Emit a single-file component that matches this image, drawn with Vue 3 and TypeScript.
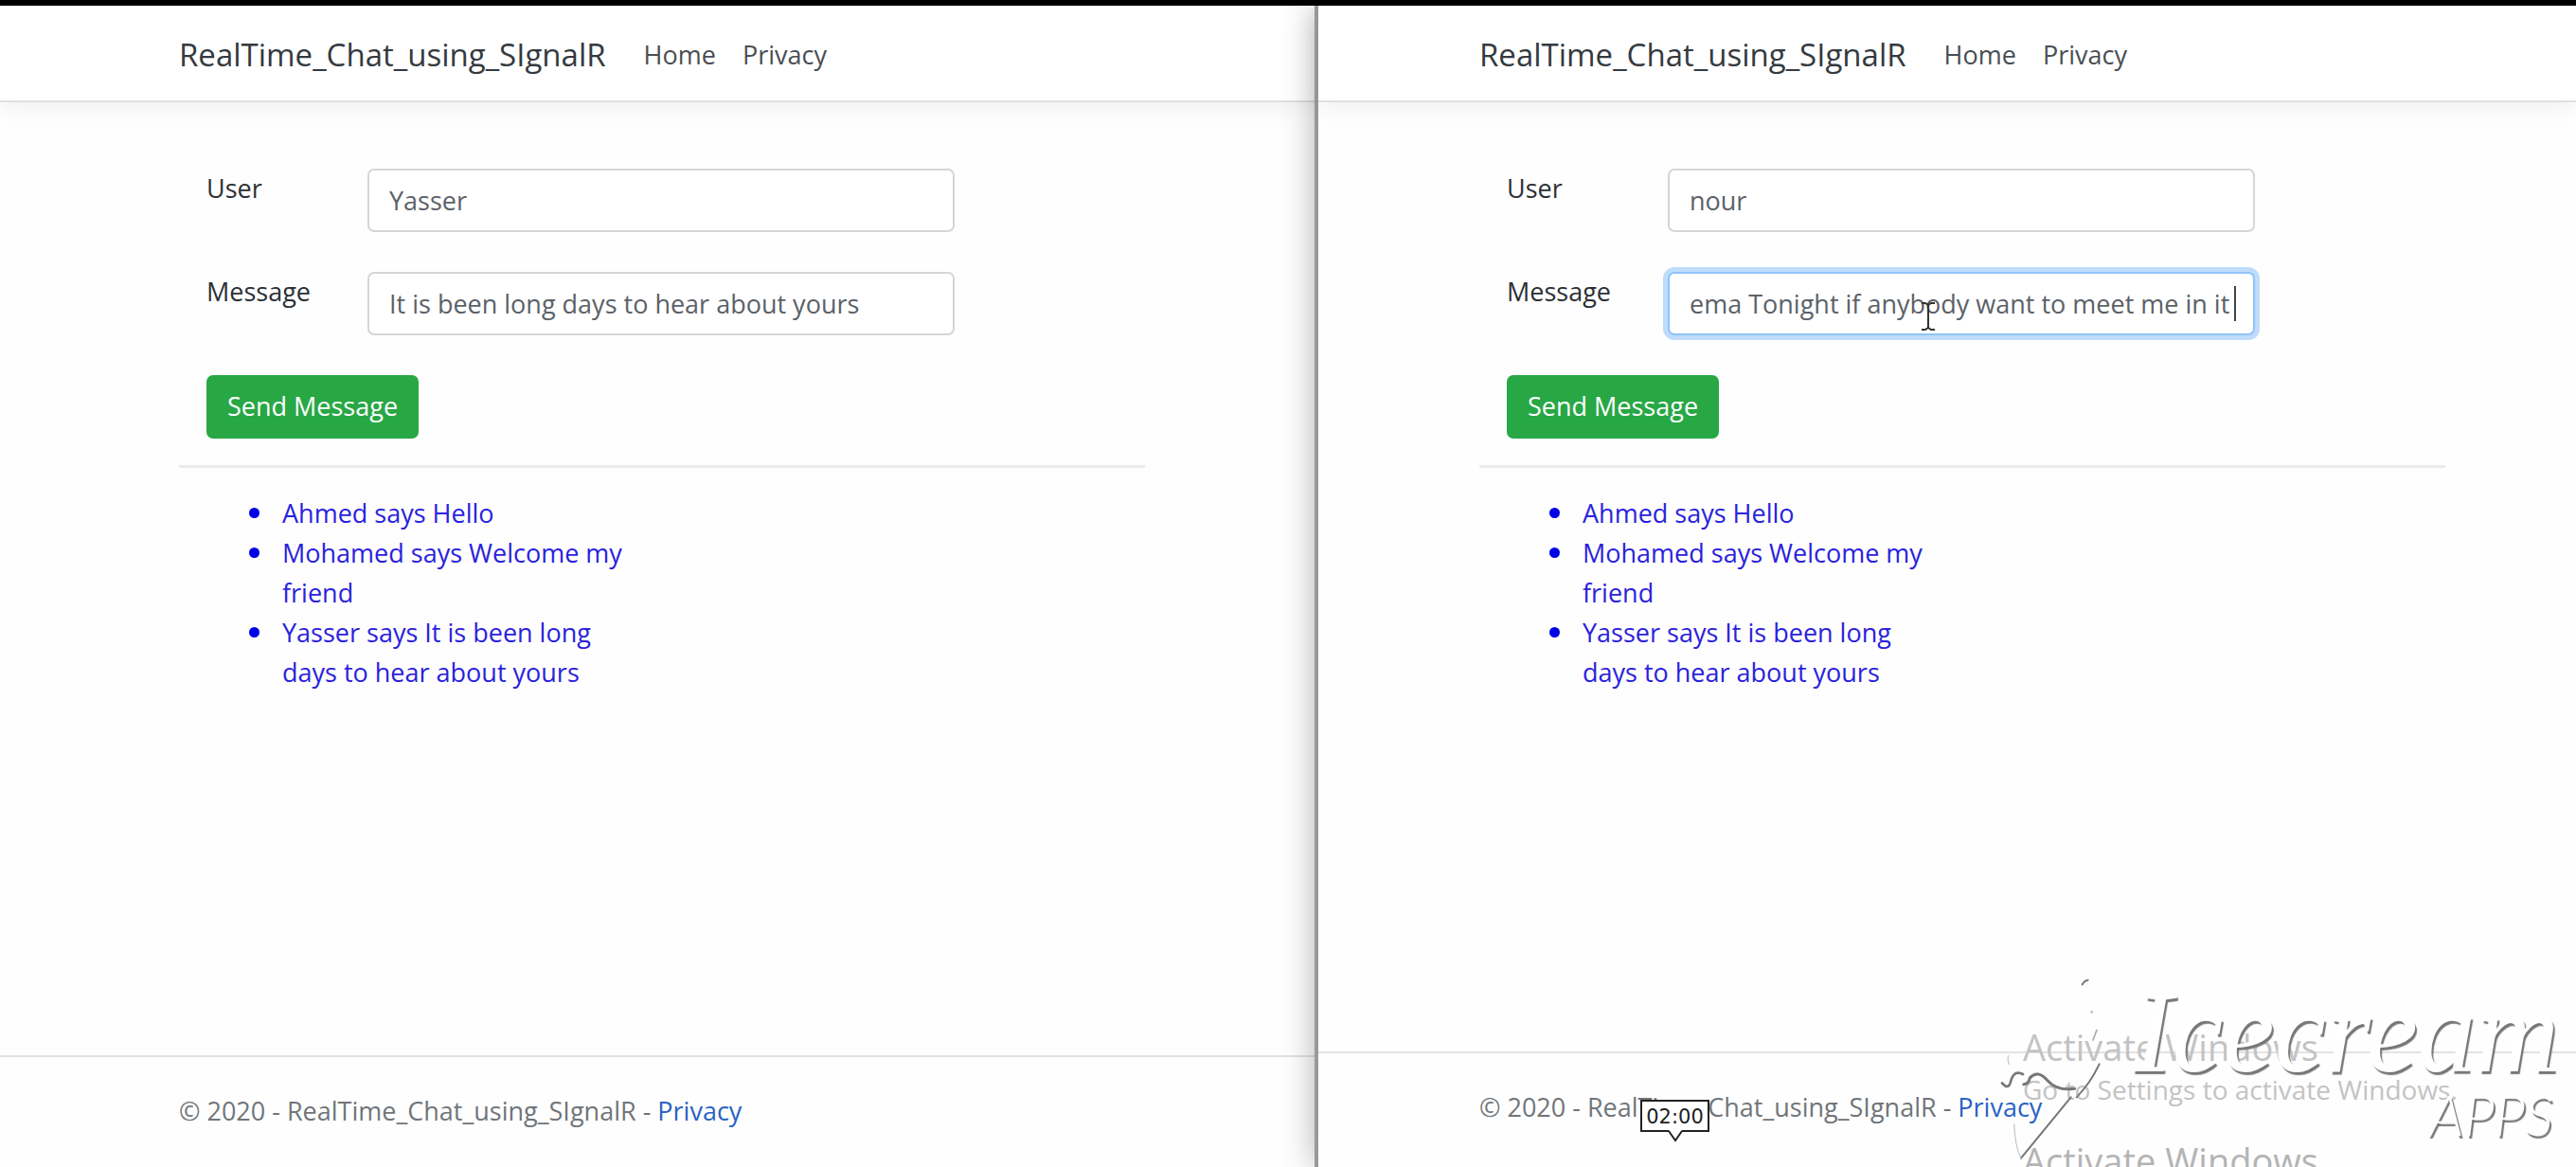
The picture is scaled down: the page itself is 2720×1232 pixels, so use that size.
<script setup lang="ts">
import { ref } from 'vue'

interface Pane {
  id: string
  user: string
  message: string
  focused: boolean
}

const appName = 'RealTime_Chat_using_SIgnalR'

const panes = ref<Pane[]>([
  { id: 'left', user: 'Yasser', message: 'It is been long days to hear about yours', focused: false },
  { id: 'right', user: 'nour', message: 'ema Tonight if anybody want to meet me in it ', focused: true },
])

const messages: string[] = [
  'Ahmed says Hello',
  'Mohamed says Welcome my friend',
  'Yasser says It is been long days to hear about yours',
]
</script>

<template>
  <div class="screen">
    <section v-for="pane in panes" :key="pane.id" class="pane" :class="pane.id">
      <header class="navbar">
        <a class="brand" href="#">{{ appName }}</a>
        <nav class="links">
          <a href="#">Home</a>
          <a href="#">Privacy</a>
        </nav>
      </header>

      <main class="content">
        <form class="form" @submit.prevent>
          <div class="row">
            <label :for="pane.id + '-user'">User</label>
            <div class="field">
              <input :id="pane.id + '-user'" v-model="pane.user" type="text" />
            </div>
          </div>
          <div class="row">
            <label :for="pane.id + '-message'">Message</label>
            <div class="field">
              <input
                :id="pane.id + '-message'"
                v-model="pane.message"
                type="text"
                :class="{ focused: pane.focused }"
              />
              <span v-if="pane.focused" class="caret"></span>
              <svg v-if="pane.focused" class="pointer" viewBox="0 0 16 32" aria-hidden="true">
                <path d="M1 2h4l3 2 3-2h4M8 4v24M1 30h4l3-2 3 2h4" fill="none" stroke="#333" stroke-width="2" />
              </svg>
            </div>
          </div>
          <button type="submit">Send Message</button>
        </form>
        <hr />
        <ul class="messages">
          <li v-for="text in messages" :key="text">{{ text }}</li>
        </ul>
      </main>

      <footer class="footer">
        <span>© 2020 - {{ appName }} - <a href="#">Privacy</a></span>
      </footer>
    </section>

    <div class="timestamp">
      02:00
      <svg class="tail" viewBox="0 0 16 13" aria-hidden="true">
        <path d="M1 0L8 11L15 0" fill="#fff" />
        <path d="M1 1L8 11L15 1" fill="none" stroke="#222" stroke-width="2" />
      </svg>
    </div>

    <div class="activation">
      <p class="title">Activate Windows</p>
      <p class="hint">Go to Settings to activate Windows.</p>
      <p class="title repeat">Activate Windows</p>
    </div>

    <svg class="cone" viewBox="450 30 351 600" aria-hidden="true">
      <g fill="none" stroke="#777" stroke-linecap="round">
        <path d="M462 370Q480 392 488 370Q498 326 528 342" stroke-width="8" />
        <path d="M530 374Q546 374 550 354Q574 326 606 362Q636 396 692 388" stroke-width="9" />
        <path d="M522 608L680 415" stroke-width="6" />
        <path d="M500 500Q503 574 522 608" stroke-width="3" stroke="#bbb" />
        <path d="M698 415Q742 370 770 310" stroke-width="6" />
        <path d="M750 234L762 202" stroke-width="5" stroke="#aaa" />
        <path d="M716 58Q722 46 734 44" stroke-width="6" />
        <path d="M746 144v2" stroke-width="7" stroke="#bbb" />
        <path d="M482 284Q478 298 485 310" stroke-width="4" stroke="#ccc" />
      </g>
    </svg>
    <div class="logo">
      <span class="word">Icecream</span>
      <span class="apps">APPS</span>
    </div>
  </div>
</template>

<style>
body {
  margin: 0;
}
</style>

<style scoped>
* {
  box-sizing: border-box;
}

.screen {
  position: relative;
  display: grid;
  grid-template-columns: 1388fr 1332fr;
  min-height: 100vh;
  overflow: hidden;
  border-top: 6px solid #000;
  background: #fefefe;
  color: #2c3034;
  font-family: "Open Sans", "Noto Sans", sans-serif;
  font-size: 27px;
  line-height: 42px;
}

.pane {
  display: flex;
  flex-direction: column;
  background: #fefefe;
}

.left {
  --start: 189px;
  --end: 179px;
}

.right {
  --start: 170px;
  --end: 138px;
  position: relative;
  border-left: 4px solid #999;
  box-shadow: 0 0 32px rgba(0, 0, 0, 0.3);
}

.navbar {
  display: flex;
  align-items: center;
  gap: 40px;
  height: 102px;
  padding: 4px var(--end) 0 var(--start);
  background: #fff;
  border-bottom: 2px solid #e0e0e0;
  box-shadow: 0 8px 24px rgba(0, 0, 0, 0.05);
}

.brand {
  color: #343a40;
  font-size: 33px;
  text-decoration: none;
}

.links {
  display: flex;
  gap: 28px;
}

.links a {
  color: #4a4e52;
  text-decoration: none;
}

.content {
  flex: 1;
  padding: 70px var(--end) 0 var(--start);
}

.form {
  padding: 0 29px;
}

.row {
  display: grid;
  grid-template-columns: 170px minmax(0, 620px);
  align-items: start;
  margin-bottom: 42px;
}

.field {
  position: relative;
}

input {
  display: block;
  width: 100%;
  height: 67px;
  padding: 0 21px;
  border: 2px solid #d3d6d9;
  border-radius: 7px;
  background: #fff;
  color: #5b6168;
  font: inherit;
  outline: none;
}

.focused {
  border-color: #8fc3f8;
  box-shadow: 0 0 0 5px #bfdcfb;
}

.caret {
  position: absolute;
  top: 15px;
  right: 20px;
  width: 2px;
  height: 37px;
  background: #444;
}

.pointer {
  position: absolute;
  top: 31px;
  left: 43%;
  width: 16px;
  height: 32px;
}

button {
  display: block;
  height: 67px;
  padding: 0 22px 2px;
  border: 0;
  border-radius: 7px;
  background: #28a745;
  color: #fff;
  font: inherit;
}

hr {
  height: 3px;
  margin: 28px 0 27px;
  border: 0;
  background: #ebebeb;
}

.messages {
  width: 483px;
  margin: 0;
  padding: 0 0 0 109px;
  color: #2a22dc;
  list-style: none;
}

.messages li {
  position: relative;
}

.messages li::before {
  content: "";
  position: absolute;
  top: 15px;
  left: -35px;
  width: 11px;
  height: 11px;
  border-radius: 50%;
  background: #0000e6;
}

.footer {
  height: 118px;
  padding: 36px var(--end) 0 var(--start);
  border-top: 2px solid #e2e2e2;
  color: #70757a;
}

.right .footer {
  height: 122px;
}

.footer a {
  color: #2a62c4;
  text-decoration: none;
}

.timestamp {
  position: absolute;
  bottom: 37px;
  left: 1732px;
  width: 73px;
  height: 34px;
  border: 2px solid #222;
  background: #fff;
  color: #222;
  font-family: "DejaVu Sans", sans-serif;
  font-size: 21px;
  line-height: 32px;
  text-align: center;
}

.tail {
  position: absolute;
  top: 30px;
  left: 27px;
  width: 16px;
  height: 13px;
}

.activation {
  position: absolute;
  top: 1074px;
  left: 2136px;
  color: #c3c3c3;
  white-space: nowrap;
}

.activation p {
  margin: 0;
}

.activation .title {
  font-size: 38px;
  line-height: 50px;
}

.activation .hint {
  font-size: 28px;
  line-height: 40px;
}

.activation .repeat {
  margin-top: 30px;
  color: #b4b4b4;
}

.cone {
  position: absolute;
  right: 493px;
  bottom: 2px;
  width: 117px;
  height: 200px;
}

.logo {
  position: absolute;
  right: 18px;
  bottom: 26px;
  display: flex;
  flex-direction: column;
  align-items: flex-end;
  color: #fff;
  font-style: italic;
  text-shadow: 2px 3px 1px #777;
}

.word {
  font-family: "Liberation Serif", serif;
  font-size: 122px;
  line-height: 112px;
}

.apps {
  margin-right: 6px;
  font-family: Lato, sans-serif;
  font-size: 60px;
  font-weight: 300;
  line-height: 60px;
}
</style>
